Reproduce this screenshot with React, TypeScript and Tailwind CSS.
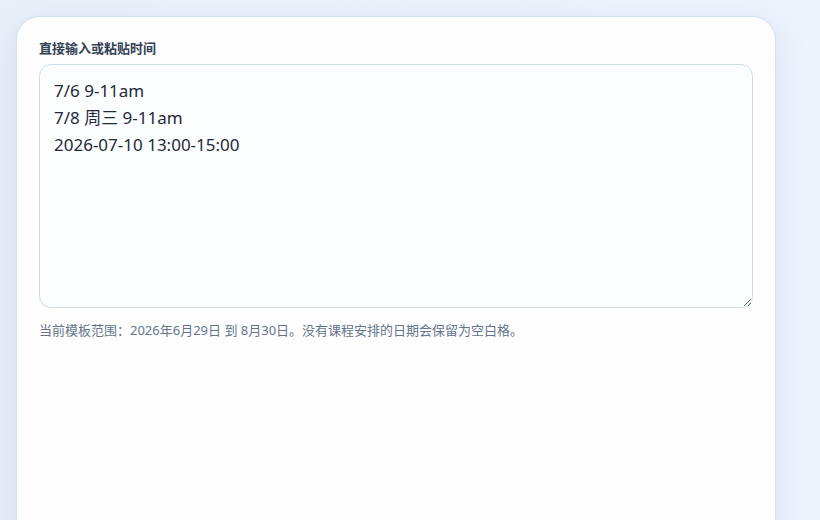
import { useState } from "react";

const initialText = `7/6 9-11am
7/8 周三 9-11am
2026-07-10 13:00-15:00`;

export default function App() {
  const [value, setValue] = useState(initialText);

  return (
    <div
      className="min-h-[520px] w-full overflow-hidden bg-gradient-to-r from-[#e9eff9] via-[#ecf1fb] to-[#edf3fd] pl-4 pt-4"
      style={{ fontFamily: '"Noto Sans", "Noto Sans CJK SC", sans-serif' }}
    >
      {/* 输入卡片 */}
      <div className="w-[760px] min-h-[560px] rounded-[24px] border border-[#d3e0f2] bg-[#fefefe] p-[22px] shadow-[0_10px_30px_rgba(120,150,200,0.18)]">
        <label className="mb-[7px] block text-[13px] font-bold leading-[18px] text-[#334155]">
          直接输入或粘贴时间
        </label>
        <textarea
          value={value}
          onChange={(e) => setValue(e.target.value)}
          className="block h-[244px] w-full resize-y rounded-xl border border-[#cfdced] bg-[#fbfdff] px-[14px] py-[12px] text-[17px] leading-[27px] text-[#1f2937] outline-none"
        />
        <p className="mt-3 text-[13px] leading-5 text-[#64748b]">
          当前模板范围：2026年6月29日 到 8月30日。没有课程安排的日期会保留为空白格。
        </p>
      </div>
    </div>
  );
}
